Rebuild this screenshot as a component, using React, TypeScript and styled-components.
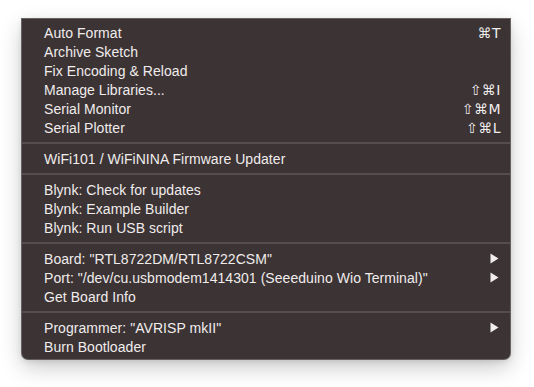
import React from "react";
import styled, { createGlobalStyle } from "styled-components";

const Global = createGlobalStyle`
  html, body { margin: 0; padding: 0; background: #ffffff; }
  body { font-family: "Liberation Sans", "DejaVu Sans", sans-serif; }
`;

const Page = styled.div`
  width: 534px;
  height: 387px;
  padding: 19px 0 0 22px;
  box-sizing: border-box;
`;

const Menu = styled.div`
  width: 488px;
  box-sizing: border-box;
  background: #3b3334;
  border-radius: 0 0 6px 6px;
  padding: 4px 0 3px 0;
  box-shadow: 0 0 0 1px rgba(90, 84, 84, 0.9), 0 8px 22px rgba(0, 0, 0, 0.22), 0 2px 6px rgba(0,0,0,0.12);
  display: flex;
  flex-direction: column;
`;

const Row = styled.div`
  height: 19px;
  display: flex;
  align-items: center;
  padding: 0 10px 0 22px;
  color: #f0ecec;
  font-size: 14px;
  letter-spacing: 0.05px;
`;

const Label = styled.span`
  flex: 1;
  white-space: nowrap;
`;

const Shortcut = styled.span`
  font-family: "DejaVu Sans", "Liberation Sans", sans-serif;
  font-size: 14px;
  letter-spacing: 0.5px;
  white-space: nowrap;
  margin-right: -1px;
`;

const Separator = styled.div`
  height: 12px;
  display: flex;
  align-items: center;
  &::after {
    content: "";
    display: block;
    width: 100%;
    height: 2px;
    background: #554d4e;
  }
`;

const Arrow = () => (
  <svg width="9" height="11" viewBox="0 0 9 11" style={{ marginRight: 1 }}>
    <path d="M0.5 0.5 L8.5 5.5 L0.5 10.5 Z" fill="#f2eeee" />
  </svg>
);

type Item = { label: string; shortcut?: string; sub?: boolean } | "sep";

const items: Item[] = [
  { label: "Auto Format", shortcut: "⌘T" },
  { label: "Archive Sketch" },
  { label: "Fix Encoding & Reload" },
  { label: "Manage Libraries...", shortcut: "⇧⌘I" },
  { label: "Serial Monitor", shortcut: "⇧⌘M" },
  { label: "Serial Plotter", shortcut: "⇧⌘L" },
  "sep",
  { label: "WiFi101 / WiFiNINA Firmware Updater" },
  "sep",
  { label: "Blynk: Check for updates" },
  { label: "Blynk: Example Builder" },
  { label: "Blynk: Run USB script" },
  "sep",
  { label: "Board: \"RTL8722DM/RTL8722CSM\"", sub: true },
  { label: "Port: \"/dev/cu.usbmodem1414301 (Seeeduino Wio Terminal)\"", sub: true },
  { label: "Get Board Info" },
  "sep",
  { label: "Programmer: \"AVRISP mkII\"", sub: true },
  { label: "Burn Bootloader" },
];

export default function App() {
  return (
    <>
      <Global />
      <Page>
        <Menu>
          {items.map((it, i) =>
            it === "sep" ? (
              <Separator key={i} />
            ) : (
              <Row key={i}>
                <Label>{it.label}</Label>
                {it.shortcut && <Shortcut>{it.shortcut}</Shortcut>}
                {it.sub && <Arrow />}
              </Row>
            )
          )}
        </Menu>
      </Page>
    </>
  );
}
